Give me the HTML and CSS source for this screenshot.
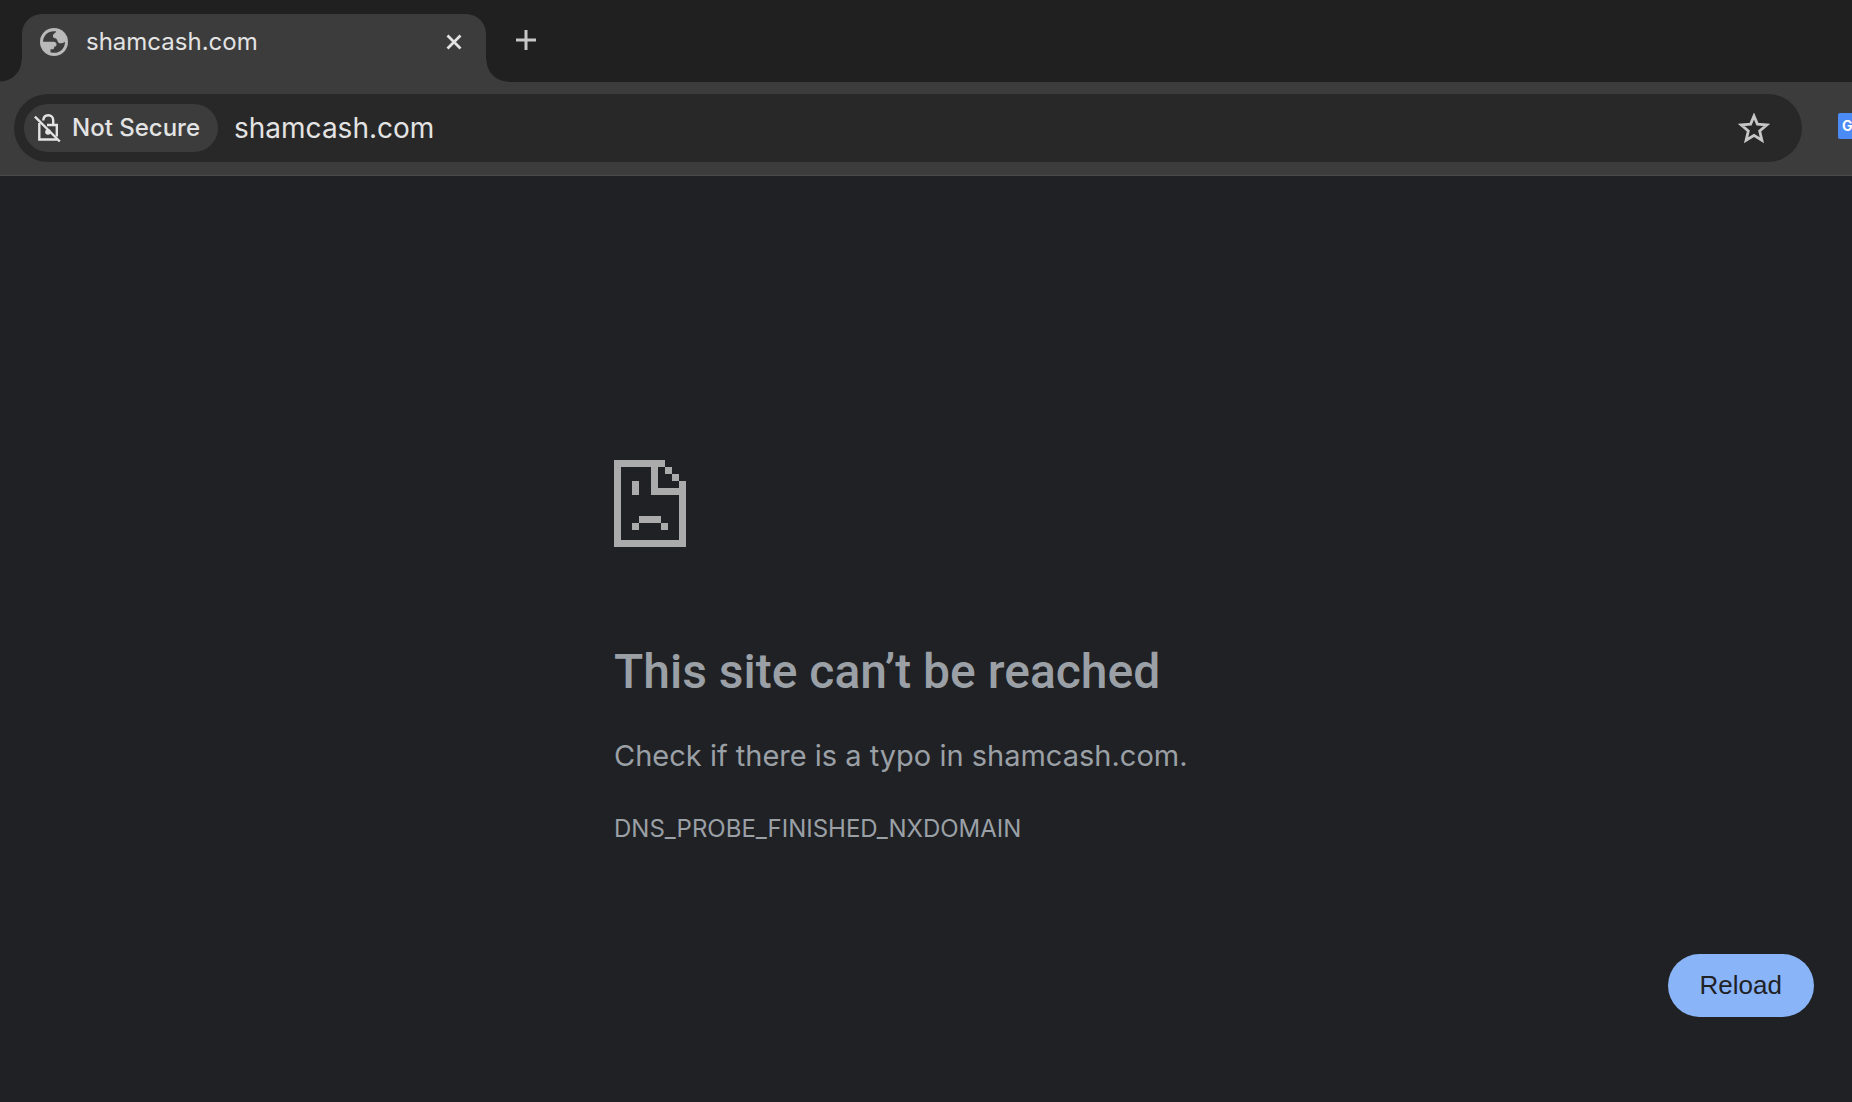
FILE: index.html
```
<!DOCTYPE html>
<html lang="en">
<head>
    <meta charset="UTF-8">
    <meta name="viewport" content="width=device-width, initial-scale=1.0">
    <title>shamcash.com</title>
    <link rel="stylesheet" href="styles.css">
</head>
<body>
    <!-- Tab strip -->
    <header class="tab-strip">
        <div class="tab">
            <svg class="tab-icon" viewBox="0 0 28 28" aria-hidden="true">
                <circle cx="14" cy="14" r="14" fill="#b9b9b9"/>
                <path d="M3 13.700C3.200 8 7.500 3.200 14 3.200H16C16 5 13.500 5.500 13 7V8.700C13 10 15 10 16.300 10.800C18 12.500 17.500 15.300 20 15.300C22 15.300 23.500 14.700 25 13.700C25 20 20.500 24.800 14 24.800L10.500 24.500V21.300H13C14 21.300 14 20 14.200 18.700C16 18.700 16.700 17.500 16.500 16C16.300 14 14.500 13.700 12.500 13.700Z" fill="#3c3c3c"/>
            </svg>
            <span class="tab-title">shamcash.com</span>
            <button class="icon-button" type="button" aria-label="Close tab">
                <svg width="16" height="16" viewBox="0 0 16 16"><path d="M1.500 1.500L14.500 14.500M14.500 1.500L1.500 14.500" stroke="#e3e3e3" stroke-width="2.800"/></svg>
            </button>
        </div>
        <button class="icon-button new-tab" type="button" aria-label="New tab">
            <svg width="20" height="20" viewBox="0 0 20 20"><path d="M10 0V20M0 10H20" stroke="#c7c7c7" stroke-width="3"/></svg>
        </button>
    </header>

    <!-- Toolbar -->
    <div class="toolbar">
        <div class="address-bar">
            <button class="security-chip" type="button">
                <svg width="28" height="30" viewBox="0 0 28 30" fill="none" stroke="#e3e3e3" stroke-width="2.400" aria-hidden="true">
                    <path d="M9.200 7.500C9.500 4.200 11.500 2.200 14.300 2.200S19.200 4.200 19.200 7.500V12"/>
                    <path d="M5.300 10V26.500H23.500M13 12H22.800V23.500"/>
                    <circle cx="14" cy="19" r="2.800" fill="#e3e3e3" stroke="none"/>
                    <path d="M0.900 3.700L25.800 28.500"/>
                </svg>
                Not Secure
            </button>
            <input class="url" type="text" value="shamcash.com" aria-label="Address" spellcheck="false">
            <button class="icon-button" type="button" aria-label="Bookmark this tab">
                <svg width="32" height="30" viewBox="0 0 32 30"><path d="M16 3L19.400 11.100L28.800 11.900L21.700 18L23.900 27.300L16 22.400L8.100 27.300L10.300 18L3.200 11.900L12.600 11.100Z" fill="none" stroke="#c7c7c7" stroke-width="2.800"/></svg>
            </button>
        </div>
        <div class="extensions">
            <button class="extension" type="button" aria-label="Google Translate">G</button>
        </div>
    </div>

    <!-- Error page -->
    <main class="error-page">
        <svg class="sad-page" width="72" height="87" viewBox="0 0 72 87" fill="#ababab" shape-rendering="crispEdges" aria-hidden="true">
            <path d="M0 0H51V7H44V28H65V21H72V87H0ZM7 7V80H65V35H37V7Z" fill-rule="evenodd"/>
            <path d="M51 7H58V14H51ZM58 14H65V21H58Z"/>
            <path d="M18 21H25V35H18ZM25 56H47V63H25ZM18 63H25V70H18ZM47 63H54V70H47Z"/>
        </svg>
        <h1>This site can’t be reached</h1>
        <p class="summary">Check if there is a typo in shamcash.com.</p>
        <p class="error-code">DNS_PROBE_FINISHED_NXDOMAIN</p>
        <div class="actions">
            <button class="reload" type="button">Reload</button>
        </div>
    </main>
</body>
</html>
```
FILE: styles.css
```
* {
    box-sizing: border-box;
}

body {
    margin: 0;
    min-height: 100vh;
    background-color: #202124;
    color: #9aa0a6;
    font-family: Inter, "Liberation Sans", sans-serif;
    overflow-x: hidden;
}

button {
    border: none;
    padding: 0;
    background: none;
    color: inherit;
    font-family: inherit;
    cursor: pointer;
}

svg {
    display: block;
    flex-shrink: 0;
}

/* Tab strip */
.tab-strip {
    display: flex;
    align-items: flex-end;
    height: 82px;
    padding-left: 22px;
    background-color: #202020;
}

.tab {
    position: relative;
    display: flex;
    align-items: center;
    width: 464px;
    height: 68px;
    padding: 0 20px 12px 18px;
    border-radius: 20px 20px 0 0;
    background-color: #3c3c3c;
    color: #e3e3e3;
}

/* curved feet on both sides of the tab */
.tab::before,
.tab::after {
    content: "";
    position: absolute;
    bottom: 0;
    width: 22px;
    height: 22px;
}

.tab::before {
    right: 100%;
    background: radial-gradient(circle at 0 0, transparent 21px, #3c3c3c 22px);
}

.tab::after {
    left: 100%;
    background: radial-gradient(circle at 100% 0, transparent 21px, #3c3c3c 22px);
}

.tab-icon {
    width: 28px;
    height: 28px;
}

.tab-title {
    flex: 1;
    margin-left: 18px;
    font-size: 24px;
    line-height: 32px;
}

.icon-button {
    display: flex;
    align-items: center;
    justify-content: center;
    width: 24px;
    height: 32px;
}

.new-tab {
    margin: 0 0 26px 28px;
}

/* Toolbar */
.toolbar {
    display: flex;
    align-items: center;
    gap: 36px;
    height: 94px;
    padding: 0 0 2px 14px;
    border-bottom: 1px solid #4a4a4a;
    background-color: #3c3c3c;
}

.address-bar {
    flex: 1;
    display: flex;
    align-items: center;
    height: 68px;
    padding: 0 36px 0 10px;
    border-radius: 34px;
    background-color: #282828;
}

.security-chip {
    display: flex;
    align-items: center;
    gap: 10px;
    height: 48px;
    padding: 0 18px 0 10px;
    border-radius: 24px;
    background-color: #3c3c3c;
    color: #e3e3e3;
    font-size: 24px;
    font-weight: 500;
    white-space: nowrap;
}

.url {
    flex: 1;
    min-width: 0;
    padding: 0 16px;
    border: none;
    outline: none;
    background: none;
    color: #e3e3e3;
    font-family: inherit;
    font-size: 28px;
}

.extensions {
    width: 14px;
    padding-bottom: 4px;
    overflow: hidden;
}

.extension {
    display: block;
    width: 26px;
    height: 26px;
    padding-left: 4px;
    border-radius: 2px;
    background-color: #4c8bf5;
    color: #fff;
    font-size: 14px;
    font-weight: 700;
    text-align: left;
}

/* Error page */
.error-page {
    max-width: 1200px;
    margin: 0 38px 0 auto;
    padding-top: 284px;
}

h1 {
    margin: 96px 0 0;
    font-family: Roboto, "Liberation Sans", sans-serif;
    font-size: 48px;
    font-weight: 500;
    line-height: 58px;
}

.summary {
    margin: 34px 0 0;
    font-size: 29px;
    line-height: 42px;
}

.error-code {
    margin: 36px 0 0;
    font-size: 24px;
    line-height: 32px;
}

.actions {
    display: flex;
    justify-content: flex-end;
    margin-top: 109px;
}

.reload {
    height: 63px;
    padding: 0 32px;
    border-radius: 32px;
    background-color: #8ab4f8;
    color: #202124;
    font-family: "Liberation Sans", Arial, sans-serif;
    font-size: 26px;
}
```
